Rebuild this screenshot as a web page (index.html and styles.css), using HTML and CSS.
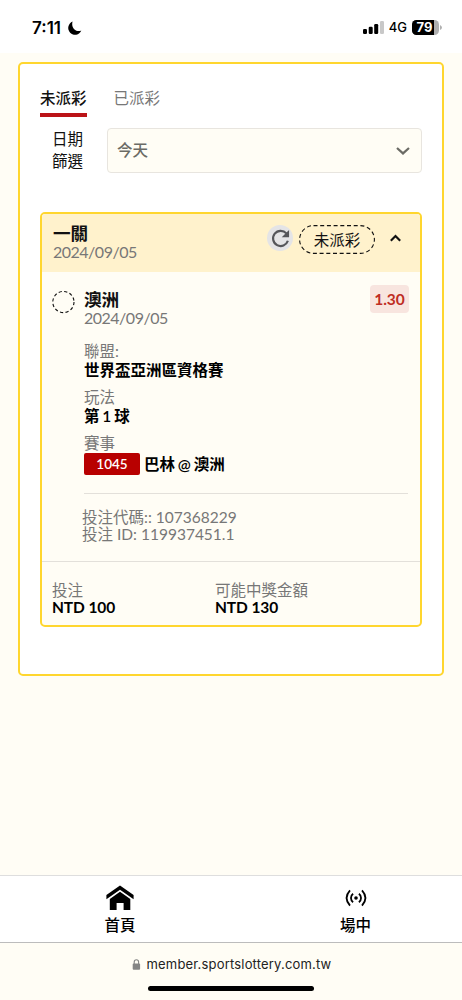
FILE: index.html
```html
<!DOCTYPE html>
<html lang="zh-Hant">
<head>
<meta charset="utf-8">
<title>投注紀錄</title>
<link rel="stylesheet" href="styles.css">
</head>
<body>
<header class="status">
  <div class="clock"><span>7:11</span>
    <svg class="moon" width="15" height="15" viewBox="0 0 15 15"><path d="M5.6 .6A6.8 6.8 0 1 0 14.3 9.6C9.6 11.6 3.6 7.4 5.6 .6Z"/></svg>
  </div>
  <div class="signals">
    <svg width="21" height="13" viewBox="0 0 21 13"><rect x="0" y="8" width="4" height="5" rx="1.2"/><rect x="5.7" y="5.8" width="4" height="7.2" rx="1.2"/><rect x="11.2" y="3" width="4" height="10" rx="1.2"/><rect x="17" y="0" width="4" height="13" rx="1.2" fill="#c8c8c8"/></svg>
    <span class="net">4G</span>
    <span class="battery"><span class="level">79</span></span><svg class="nub" width="2" height="5" viewBox="0 0 2 5"><path d="M0 0Q2 1 2 2.5T0 5Z" fill="#b0b0b0"/></svg>
  </div>
</header>
<main class="page">
  <section class="frame">
    <nav class="tabs"><a class="tab active">未派彩</a><a class="tab">已派彩</a></nav>
    <div class="filter">
      <label class="filter-label">日期<br>篩選</label>
      <div class="select"><span>今天</span>
        <svg width="14" height="8" viewBox="0 0 14 8"><path d="M1 1L7 6.4 13 1" fill="none" stroke="#6b6b65" stroke-width="2.2"/></svg>
      </div>
    </div>
    <article class="card">
      <header class="card-head">
        <div class="heading"><h2 class="title">一關</h2><p class="date">2024/09/05</p></div>
        <div class="actions">
          <span class="refresh"><svg width="19" height="19" viewBox="0 0 20 20"><path d="M16.2 4.6A8 8 0 1 0 17.8 12.4" fill="none" stroke="#55565a" stroke-width="2.3"/><path d="M19 1V8.7H11.3Z" fill="#55565a"/></svg></span>
          <span class="pill"><svg class="outline" width="76" height="29" viewBox="0 0 76 29"><rect x=".6" y=".6" width="74.8" height="27.8" rx="13.9"/></svg>未派彩</span>
          <svg class="caret" width="11" height="8" viewBox="0 0 11 8"><path d="M.8 6.8L5.5 1.9 10.2 6.8" fill="none" stroke="#111" stroke-width="2.1"/></svg>
        </div>
      </header>
      <div class="bet">
        <svg class="ring" width="24" height="24" viewBox="0 0 24 24"><circle cx="12.4" cy="12" r="10.6"/></svg>
        <div class="details">
          <div class="pick">
            <div><h3 class="title">澳洲</h3><p class="date">2024/09/05</p></div>
            <span class="odds">1.30</span>
          </div>
          <dl class="facts">
            <dt>聯盟:</dt><dd>世界盃亞洲區資格賽</dd>
            <dt>玩法</dt><dd>第 1 球</dd>
            <dt>賽事</dt><dd class="match"><span class="code">1045</span>巴林 @ 澳洲</dd>
          </dl>
          <div class="ids"><p>投注代碼:: 107368229</p><p>投注 ID: 119937451.1</p></div>
        </div>
      </div>
      <footer class="totals">
        <div><p class="label">投注</p><p class="amount">NTD 100</p></div>
        <div><p class="label">可能中獎金額</p><p class="amount">NTD 130</p></div>
      </footer>
    </article>
  </section>
</main>
<nav class="bottom">
  <a class="nav-item"><svg width="28" height="26" viewBox="0 0 28 26"><path d="M14 .5L27.6 10V14.3L14 4.8.4 14.3V10Z"/><path d="M14 6.8L24.3 14V25H17.6V18H10.6V25H3.8V14Z"/></svg><span>首頁</span></a>
  <a class="nav-item"><svg width="22" height="26" viewBox="0 0 22 26"><circle cx="11" cy="13" r="1.8"/><g fill="none" stroke="#000" stroke-width="1.8"><path d="M8.1 8.8A5.2 5.2 0 0 0 8.1 17.2M13.9 8.8A5.2 5.2 0 0 1 13.9 17.2M5 5.4Q-1.9 13 5 20.6M17 5.4Q23.9 13 17 20.6"/></g></svg><span>場中</span></a>
</nav>
<footer class="browser">
  <div class="address"><svg width="9" height="11" viewBox="0 0 9 11"><rect x=".7" y="4.4" width="7.4" height="6.3" rx="1" fill="#858585"/><path d="M2.2 5V3a2.2 2.2 0 0 1 4.4 0V5" fill="none" stroke="#858585" stroke-width="1.1"/></svg><span>member.sportslottery.com.tw</span></div>
  <div class="home-bar"></div>
</footer>
</body>
</html>
```
FILE: styles.css
```css
* { box-sizing: border-box; }
body {
  margin: 0;
  height: 1000px;
  display: flex;
  flex-direction: column;
  background: #fffdf5;
  color: #111;
  font: 15.5px/19px Lato, "Noto Sans CJK TC", sans-serif;
}
h2, h3, p, dl, dd { margin: 0; }
svg { display: block; flex: none; }

.status {
  height: 53px;
  padding: 2px 20px 0 32px;
  display: flex;
  align-items: center;
  justify-content: space-between;
  background: #fff;
  font-family: Inter, sans-serif;
}
.clock { display: flex; align-items: center; gap: 6px; color: #000; font-size: 17px; font-weight: 600; padding-top: 1px; }
.signals { display: flex; align-items: center; color: #000; }
.net { margin: 0 5px; font-size: 13px; font-weight: 500; }
.battery { width: 27px; height: 15px; border-radius: 4.5px; overflow: hidden; background: #b0b0b0; }
.level { display: block; width: 22px; height: 15px; padding-left: 3px; background: #000; color: #fff; font-size: 13px; font-weight: 700; line-height: 15px; text-align: center; }
.nub { margin-left: 1px; }

.page { flex: 1; padding: 9px 18px 0; }
.frame { height: 614px; padding: 22px 20px 0; border: 2px solid #ffd62e; border-radius: 5px; background: #fff; }
.tabs { display: flex; gap: 27px; }
.tab { height: 31px; padding-top: 3px; color: #777; }
.tab.active { border-bottom: 4px solid #bb1317; color: #111; font-weight: 500; }
.filter { display: flex; margin-top: 11px; }
.filter-label { width: 67px; padding-left: 12px; line-height: 22px; }
.select { flex: 1; height: 45px; display: flex; align-items: center; justify-content: space-between; padding: 0 11px 0 9px; border: 1px solid #e8e5df; border-radius: 4px; background: #fffdf5; color: #6b6b65; font-weight: 500; }

.card { height: 415px; margin-top: 39px; border: 2px solid #ffd62e; border-radius: 5px; background: #fffdf5; overflow: hidden; }
.card-head { height: 58px; display: flex; justify-content: space-between; padding: 10px 19px 0 11px; background: #fff2cc; }
.title { font-size: 17.6px; line-height: 19px; font-weight: 700; color: #111; }
.date { font-size: 16px; line-height: 17px; color: #777; letter-spacing: -.5px; }
.actions { display: flex; align-items: center; height: 30px; }
.refresh { display: grid; place-items: center; width: 26px; height: 26px; margin: -2px 6px 0 0; border-radius: 50%; background: #e4e4e6; }
.pill { position: relative; width: 76px; height: 29px; line-height: 30px; text-align: center; }
.outline { position: absolute; inset: 0; fill: none; stroke: #111; stroke-width: 1.1; stroke-dasharray: 4 2.7; }
.caret { margin: -2px 0 0 15px; }

.bet { height: 290px; display: flex; padding: 18px 11px 0 9px; border-bottom: 1px solid #e3e0da; }
.ring { fill: none; stroke: #111; stroke-width: 1.1; stroke-dasharray: 3.2 2.4; }
.details { flex: 1; padding-left: 9px; }
.pick { display: flex; justify-content: space-between; height: 52px; }
.odds { width: 39px; height: 28px; margin-top: -5px; border-radius: 4px; background: #f8e5df; color: #bf2d24; font-weight: 700; line-height: 28px; text-align: center; letter-spacing: -.1px; }
.facts { height: 152px; margin-right: 1px; border-bottom: 1px solid #e3e0da; }
.facts dt { color: #777; }
.facts dd { margin-bottom: 8px; font-weight: 600; color: #000; word-spacing: -1px; }
.match { display: flex; align-items: center; gap: 4px; }
.code { width: 56px; height: 22px; flex: none; border-radius: 2px; background: #b80000; color: #fff; font-size: 13.5px; line-height: 22px; text-align: center; }
.ids { padding-top: 15px; margin-left: -2px; color: #777; line-height: 17px; }
.totals { display: grid; grid-template-columns: 163px 1fr; padding: 20px 10px 0; line-height: 17px; }
.label { color: #777; }
.amount { color: #000; font-weight: 700; letter-spacing: -.1px; }

.bottom { height: 68px; display: grid; grid-template-columns: 240px 1fr; border-top: 1px solid #dedede; border-bottom: 1px solid #bcbcbc; background: #fff; }
.nav-item { display: flex; flex-direction: column; align-items: center; padding-top: 9px; font-weight: 500; color: #000; }
.nav-item span { margin-top: 5px; }
.nav-item:last-child { padding-left: 9px; }
.browser { height: 57px; display: flex; flex-direction: column; align-items: center; font: 13px/17px Inter, sans-serif; color: #222; }
.address { display: flex; align-items: center; gap: 6px; margin: 13px 0 0 1px; letter-spacing: .18px; }
.home-bar { width: 166px; height: 5px; margin-top: 13px; border-radius: 3px; background: #000; }
```
